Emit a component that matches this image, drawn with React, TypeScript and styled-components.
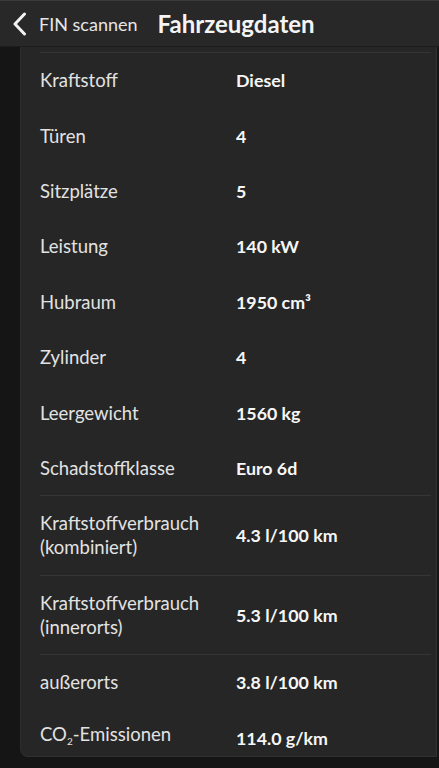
import * as React from "react";
import styled, { createGlobalStyle } from "styled-components";

const GlobalStyle = createGlobalStyle`
  html, body {
    margin: 0;
    padding: 0;
    background: #151515;
    font-family: Lato, "Noto Sans", sans-serif;
  }
`;

const Screen = styled.div`
  height: 100vh;
  display: flex;
  flex-direction: column;
  background: #151515;
`;

const Header = styled.div`
  height: 47px;
  flex-shrink: 0;
  display: flex;
  align-items: center;
  padding: 0 12px;
  background: #282828;
  border-top: 1px solid #3a3a3a;
  border-bottom: 1px solid #1c1c1c;
  box-sizing: border-box;
`;

const BackButton = styled.button`
  display: flex;
  align-items: center;
  gap: 12px;
  border: none;
  background: transparent;
  padding: 0;
  color: #e6e6e6;
  font-family: inherit;
  font-size: 18px;
  outline: unset;
`;

const Title = styled.h1`
  margin: 0 0 0 20px;
  font-size: 24px;
  font-weight: 700;
  color: #f4f4f4;
`;

const Body = styled.div`
  flex: 1;
  min-height: 0;
  display: flex;
  padding: 0 2px 11px 20px;
`;

const Card = styled.div`
  flex: 1;
  overflow: hidden;
  background: #262626;
  border-right: 1px solid #333;
  border-bottom: 1px solid #303030;
  border-left: 1px solid #2c2c2c;
  border-radius: 0 0 0 8px;
  padding: 5px 5px 0 19px;
`;

const Row = styled.div<{ $tall?: boolean; $line?: boolean }>`
  display: flex;
  align-items: center;
  height: ${(p) => (p.$tall ? "79.5px" : "55.4px")};
  box-sizing: border-box;
  border-top: 1px solid ${(p) => (p.$line ? "#353535" : "transparent")};
`;

const Label = styled.div`
  width: 196px;
  flex-shrink: 0;
  font-size: 18.5px;
  line-height: 24px;
  color: #e2e2e2;
`;

const Value = styled.div`
  font-size: 17.8px;
  font-weight: 700;
  color: #f6f6f6;
`;

const Sub = styled.sub`
  font-size: 10px;
  vertical-align: -4px;
`;

const rows: { label: React.ReactNode; value: string; tall?: boolean; line?: boolean }[] = [
  { label: "Kraftstoff", value: "Diesel", line: true },
  { label: "Türen", value: "4" },
  { label: "Sitzplätze", value: "5" },
  { label: "Leistung", value: "140 kW" },
  { label: "Hubraum", value: "1950 cm³" },
  { label: "Zylinder", value: "4" },
  { label: "Leergewicht", value: "1560 kg" },
  { label: "Schadstoffklasse", value: "Euro 6d" },
  { label: <>Kraftstoffverbrauch<br />(kombiniert)</>, value: "4.3 l/100 km", tall: true, line: true },
  { label: <>Kraftstoffverbrauch<br />(innerorts)</>, value: "5.3 l/100 km", tall: true, line: true },
  { label: "außerorts", value: "3.8 l/100 km", line: true },
  { label: <>CO<Sub>2</Sub>-Emissionen</>, value: "114.0 g/km" },
];

export default function App() {
  return (
    <Screen>
      <GlobalStyle />
      <Header>
        <BackButton>
          <svg width="15" height="24" viewBox="0 0 15 24">
            <path d="M12.5 2 L3 12 L12.5 22" fill="none" stroke="#f2f2f2" strokeWidth="3" strokeLinecap="round" strokeLinejoin="round" />
          </svg>
          FIN scannen
        </BackButton>
        <Title>Fahrzeugdaten</Title>
      </Header>
      <Body>
        <Card>
          {rows.map((r, i) => (
            <Row key={i} $tall={r.tall} $line={r.line}>
              <Label>{r.label}</Label>
              <Value>{r.value}</Value>
            </Row>
          ))}
        </Card>
      </Body>
    </Screen>
  );
}
